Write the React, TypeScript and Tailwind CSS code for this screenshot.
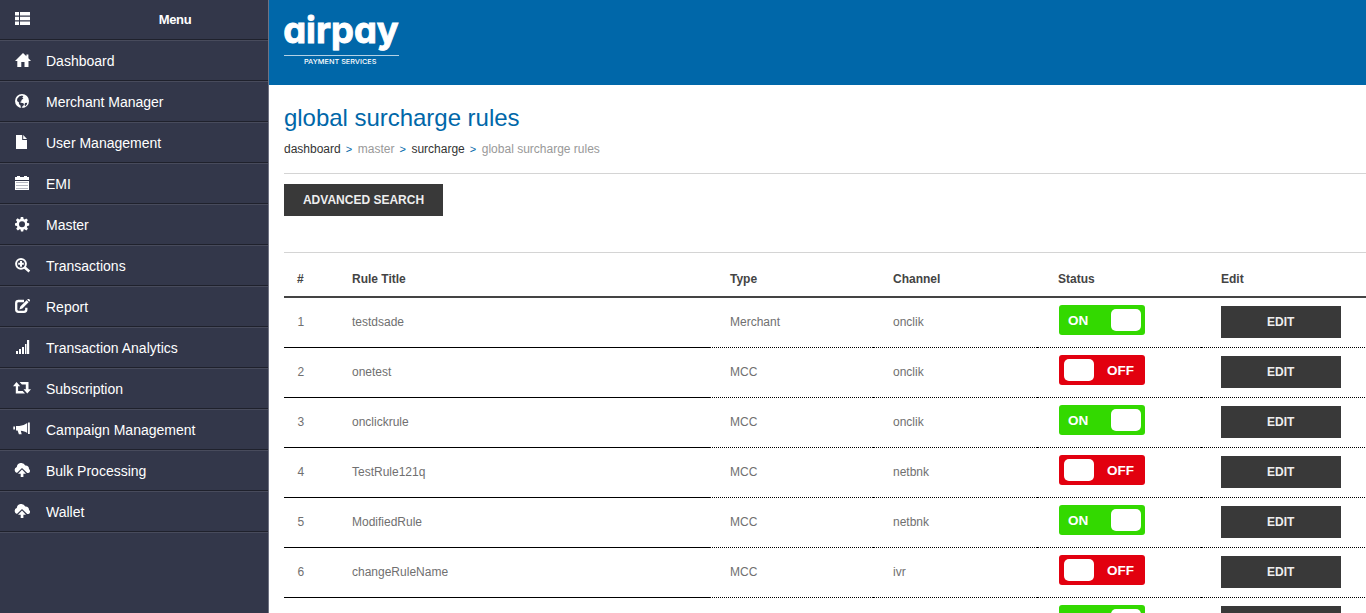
import type { ReactNode } from "react";

const icons: Record<string, ReactNode> = {
  list: (
    <path d="M3 0h4v3.4H3zM8 0h10v3.4H8zM3 4.7h4v3.6H3zM8 4.7h10v3.6H8zM3 9.6h4V13H3zM8 9.6h10V13H8z" />
  ),
  home: <path d="M11 1 3 9h2.3v6h4V10h3.2v5h4V9H19l-2.6-2.7V2.6h-2v1.7z" />,
  globe: (
    <>
      <circle cx="10" cy="8" r="7" />
      <path
        className="fill-[#33374a]"
        d="M5.2 5.8 7.4 3.2l2.8-.7 1.2 1.2-1.2.8 1.2 1-1.9 1.6-.2 1.5-1.5.3 1.3.9 2.4.5.5 1.6-1.6 1.3-.2 1.9-1.3-.4-.4-2.3-1.6-1.4.1-1.5-1.9-1.4zM13 9.9l2.2-.2-.4 1.9-1.5 1.7-.8-1.4z"
      />
    </>
  ),
  file: <path d="M4 1h6.2v5H15v9H4zM11.2 1 15 5h-3.8z" />,
  calendar: (
    <>
      <path d="M3 2h2V1h3v1h4V1h3v1h2v3H3zM3 6h14v9H3z" />
      <path
        className="fill-[#b4b6c0]"
        d="M4 7h12v1H4zM4 10h12v1H4zM4 13h12v1H4z"
      />
    </>
  ),
  cog: (
    <path
      fillRule="evenodd"
      d="m8.8 1-.4 2-1 .5-1.8-1.2-1.7 1.8 1.2 1.7-.5 1.1L3 7.3v2.2l1.9.4.5 1.1-1.2 1.7 1.7 1.7 1.7-1.2 1 .4.3 1.9h2.3l.4-1.9 1-.4 1.7 1.2 1.6-1.7-1.1-1.7.5-1.1 1.9-.4V7.3l-1.9-.4-.5-1.1 1.1-1.7-1.6-1.7-1.7 1.1-1-.4L11.2 1zM10 5.2a3 3 0 1 1 0 6 3 3 0 0 1 0-6z"
    />
  ),
  zoom: (
    <>
      <circle cx="9" cy="6.8" r="4.9" fill="none" stroke="currentColor" strokeWidth="2" />
      <path d="m11.8 11.4 1.8-1.8 4.6 4-1.6 1.9zM8 4h2v1.8h1.8v2H10v1.9H8V7.8H6.2v-2H8z" />
    </>
  ),
  edit: (
    <>
      <path
        d="M12 3H6.5A2.3 2.3 0 0 0 4.2 5.2v6.3a2.3 2.3 0 0 0 2.3 2.3H12a2.3 2.3 0 0 0 2.3-2.3V9.8"
        fill="none"
        stroke="currentColor"
        strokeWidth="2.3"
      />
      <path d="m14.6 2.3 2 1.9-6.2 6.2-3 1.2.9-3zM15.2 1.7l.7-.7h1.1l1 1v.8l-.8.9z" />
    </>
  ),
  signal: (
    <path d="M4 12h2v3H4zM7 10h2v5H7zM10 8h2v7h-2zM13 5h1.5v10H13zM15 1h2.2v14H15z" />
  ),
  retweet: (
    <path d="m4.5 2 3.7 4.2H6.1V11h4.6l2.3 2.5H3.8V6.2H1zM7.6 2h8.9v7.2H19l-3.7 4.3-3.8-4.3h2.3V4.5H9.9z" />
  ),
  horn: (
    <path d="M16 1.5h1.8V13H16zM15.2 2v9.9c-1.8-1.1-4-1.9-6.4-2.1l.9 3.4H6.9L5.6 9.6H4V4.9h3.3c3.2-.3 5.9-1.4 7.9-2.9zM1.3 5.6H3v2.9H1.3z" />
  ),
  cloud: (
    <path d="M5.1 11A3.1 3.1 0 0 1 4.8 5 4.5 4.5 0 0 1 13.3 3.4 3.6 3.6 0 0 1 17 7a2.2 2.2 0 0 1-.6 4h-1.2L10 5.9 4.9 11zM10 7.6l4 4.1h-2.6V15H8.7v-3.3H6z" />
  ),
};

function Icon({ name }: { name: string }) {
  return (
    <svg viewBox="0 0 20 16" className="h-4 w-5 shrink-0 fill-current" aria-hidden="true">
      {icons[name]}
    </svg>
  );
}

const menu = [
  ["home", "Dashboard"],
  ["globe", "Merchant Manager"],
  ["file", "User Management"],
  ["calendar", "EMI"],
  ["cog", "Master"],
  ["zoom", "Transactions"],
  ["edit", "Report"],
  ["signal", "Transaction Analytics"],
  ["retweet", "Subscription"],
  ["horn", "Campaign Management"],
  ["cloud", "Bulk Processing"],
  ["cloud", "Wallet"],
];

const rules = [
  { id: "1", title: "testdsade", type: "Merchant", channel: "onclik", on: true },
  { id: "2", title: "onetest", type: "MCC", channel: "onclik", on: false },
  { id: "3", title: "onclickrule", type: "MCC", channel: "onclik", on: true },
  { id: "4", title: "TestRule121q", type: "MCC", channel: "netbnk", on: false },
  { id: "5", title: "ModifiedRule", type: "MCC", channel: "netbnk", on: true },
  { id: "6", title: "changeRuleName", type: "MCC", channel: "ivr", on: false },
];

function Sidebar() {
  return (
    <aside className="w-[269px] shrink-0 border-r border-[#6f7282] bg-[#33374a] text-sm text-white">
      <div className="flex h-10 border-b border-[#1f212c] pl-3">
        <div className="pt-3">
          <Icon name="list" />
        </div>
        <div className="ml-[50px] w-[186px] pt-[10px] text-center text-[13px] leading-5 font-bold tracking-[-0.4px]">
          Menu
        </div>
      </div>
      <nav>
        {menu.map(([icon, label]) => (
          <a
            key={label}
            className="flex h-[41px] items-start gap-[14px] border-b border-t border-b-[#1f212c] border-t-[#484b5c] pl-3"
          >
            <span className="pt-[11px]">
              <Icon name={icon} />
            </span>
            <span className="pt-[10px]">{label}</span>
          </a>
        ))}
      </nav>
      <div className="border-t border-[#484b5c]" />
    </aside>
  );
}

function Toggle({ on, label }: { on: boolean; label?: string }) {
  return (
    <div
      className={`flex h-[30px] w-[86px] items-center justify-between rounded-[3px] text-[13.5px] font-bold text-white ${
        on ? "bg-[#33d900] pr-1 pl-[9.5px]" : "flex-row-reverse bg-[#e2000f] pr-[10.5px] pl-[5px]"
      }`}
    >
      <span className="pt-px">{label}</span>
      <span className="h-[22px] w-[30px] rounded-[5px] bg-white" />
    </div>
  );
}

const columns = "grid grid-cols-[54px_372px_163px_164px_164px_180px]";
const solid = "border-b border-black";
const dotted = "border-b border-dotted border-black";

export default function App() {
  return (
    <div className="flex h-[613px] w-[1366px] overflow-hidden bg-white font-['Liberation_Sans',Arial,sans-serif]">
      <Sidebar />
      <div className="min-w-0 flex-1 overflow-hidden">
        <header className="h-[85px] bg-[#0067a9] pl-[15px] text-white">
          <svg
            width="130"
            height="80"
            viewBox="0 0 130 80"
            className="overflow-visible fill-current"
            role="img"
            aria-label="airpay payment services"
          >
            <text
              x="-0.8"
              y="43.3"
              textLength="115.5"
              lengthAdjust="spacingAndGlyphs"
              className="stroke-white stroke-[0.9] font-['Inter',sans-serif] text-[36.5px] font-bold [font-feature-settings:'cv11'_1]"
            >
              airpay
            </text>
            <rect x="0" y="55" width="115" height="1" opacity="0.7" />
            <text
              x="20"
              y="64.3"
              textLength="72.5"
              lengthAdjust="spacingAndGlyphs"
              className="font-['Inter',sans-serif] text-[6.4px] font-medium"
            >
              PAYMENT SERVICES
            </text>
          </svg>
        </header>
        <main className="pl-[15px]">
          <h1 className="pt-[17px] text-2xl leading-8 tracking-[-0.03px] text-[#0067a9]">global surcharge rules</h1>
          <div className="flex h-[39px] gap-[5px] pt-[7px] text-xs leading-4 text-[#999]">
            <a className="text-[#333]">dashboard</a>
            <span className="w-[7px] text-[11px] text-[#0067a9]">&gt;</span>
            <span>master</span>
            <span className="w-[7px] text-[11px] text-[#0067a9]">&gt;</span>
            <a className="text-[#333]">surcharge</a>
            <span className="w-[7px] text-[11px] text-[#0067a9]">&gt;</span>
            <span>global surcharge rules</span>
          </div>
          <div className="border-t border-[#d4d4d4] pt-[10px]">
            <button className="block h-8 w-[159px] bg-[#393939] text-xs font-bold text-[#eee]">
              ADVANCED SEARCH
            </button>
          </div>
          <section className="mt-9 border-t border-[#d4d4d4]">
            <div className={`${columns} h-[45px] border-b-2 border-[#444] pt-[18px] text-xs font-bold text-[#444]`}>
              <span className="pl-[13px]">#</span>
              <span className="pl-[14px]">Rule Title</span>
              <span className="pl-5">Type</span>
              <span className="pl-5">Channel</span>
              <span className="pl-[21px]">Status</span>
              <span className="pl-5">Edit</span>
            </div>
            {rules.map((rule) => (
              <div key={rule.id} className={`${columns} h-[50px] text-xs leading-[48px] text-[#707070]`}>
                <span className={`${solid} pl-[13.5px]`}>{rule.id}</span>
                <span className={`${solid} pl-[14px]`}>{rule.title}</span>
                <span className={`${dotted} pl-5`}>{rule.type}</span>
                <span className={`${dotted} pl-5`}>{rule.channel}</span>
                <div className={`${dotted} pt-[7px] pl-[21.5px]`}>
                  <Toggle on={rule.on} label={rule.on ? "ON" : "OFF"} />
                </div>
                <div className={`${dotted} pt-2 pl-[19.5px]`}>
                  <button className="block h-8 w-[120.5px] bg-[#393939] text-xs font-bold text-[#eee]">EDIT</button>
                </div>
              </div>
            ))}
            <div className={columns}>
              <div className="col-start-5 pt-[7px] pl-[21.5px]">
                <Toggle on />
              </div>
              <div className="pt-2 pl-[19.5px]">
                <div className="h-8 w-[120.5px] bg-[#393939]" />
              </div>
            </div>
          </section>
        </main>
      </div>
    </div>
  );
}
